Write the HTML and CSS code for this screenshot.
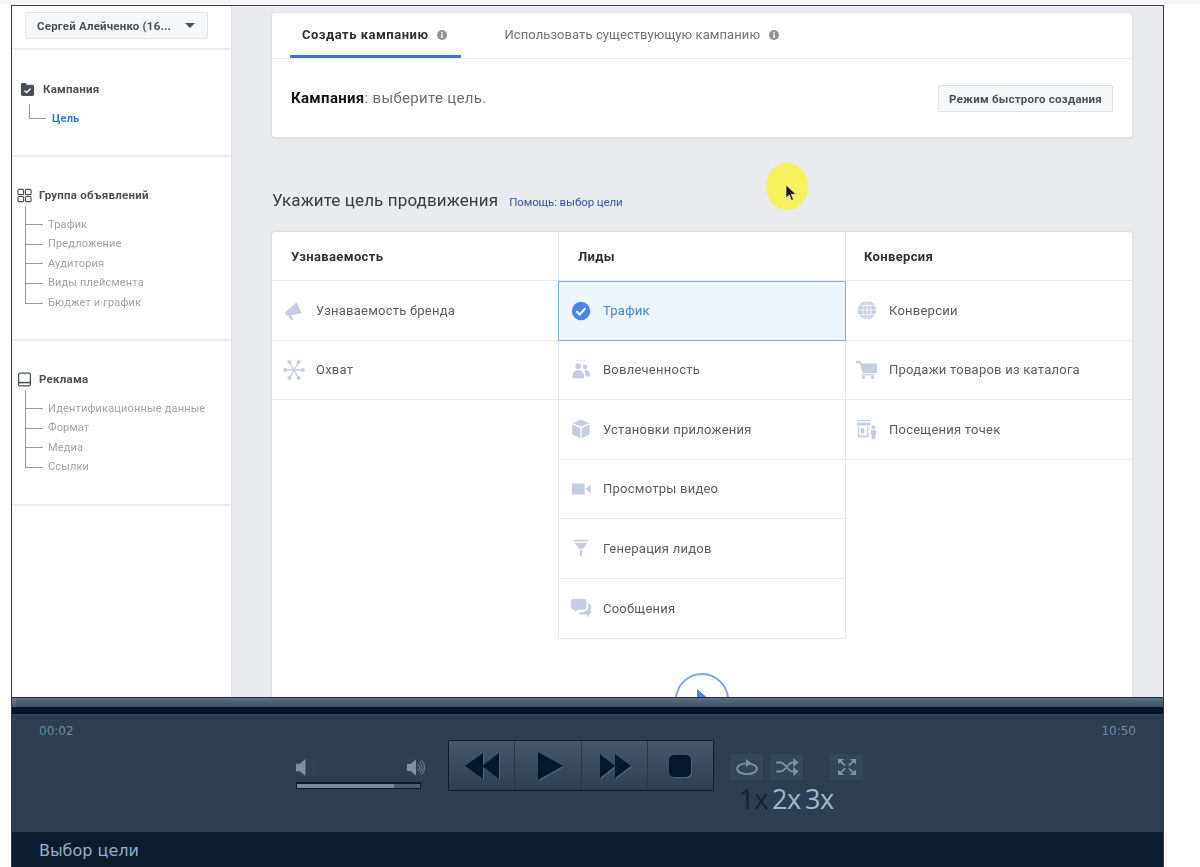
FILE: index.html
```html
<!DOCTYPE html>
<html lang="ru">
<head>
  <meta charset="UTF-8">
  <meta name="viewport" content="width=device-width, initial-scale=1.0">
  <title>Выбор цели</title>
  <link rel="stylesheet" href="styles.css">
</head>
<body>
  <div class="top-strip"></div>
  <div class="frame">
    <div class="app">
      <div class="sidebar">
        <div class="account">
          <div class="account-btn"><span>Сергей Алейченко (16...</span><i class="caret"></i></div>
        </div>
        <div class="side-section">
          <div class="side-head head-campaign">
            <svg class="side-icon" viewBox="0 0 16 16"><path d="M1 4V2.5C1 1.7 1.7 1 2.5 1H6l1.5 2H13c1 0 2 .8 2 2v8c0 1-1 2-2 2H3c-1 0-2-1-2-2z" fill="#4b4f56"/><path d="M4.8 9l2.2 2.2 4.2-4" fill="none" stroke="#fff" stroke-width="1.6"/></svg>
            <span>Кампания</span>
          </div>
          <ul class="tree tree-goal">
            <li class="current">Цель</li>
          </ul>
        </div>
        <div class="side-section">
          <div class="side-head">
            <svg class="side-icon" viewBox="0 0 16 16" fill="none" stroke="#4b4f56" stroke-width="1.2"><rect x="1" y="1.5" width="6" height="5.5" rx="1"/><rect x="9" y="1.5" width="6" height="5.5" rx="1"/><rect x="1" y="9" width="6" height="5.5" rx="1"/><rect x="9" y="9" width="6" height="5.5" rx="1"/></svg>
            <span>Группа объявлений</span>
          </div>
          <ul class="tree">
            <li>Трафик</li>
            <li>Предложение</li>
            <li>Аудитория</li>
            <li>Виды плейсмента</li>
            <li>Бюджет и график</li>
          </ul>
        </div>
        <div class="side-section">
          <div class="side-head">
            <svg class="side-icon" viewBox="0 0 16 16" fill="none" stroke="#4b4f56" stroke-width="1.4"><rect x="1.7" y="1.2" width="12.6" height="13.6" rx="1.6"/><path d="M2 11.3h12" stroke-width="1.6"/></svg>
            <span>Реклама</span>
          </div>
          <ul class="tree">
            <li>Идентификационные данные</li>
            <li>Формат</li>
            <li>Медиа</li>
            <li>Ссылки</li>
          </ul>
        </div>
      </div>

      <div class="main">
        <div class="card top-card">
          <div class="tabs">
            <div class="tab active">Создать кампанию
              <svg class="info" viewBox="0 0 10 10"><circle cx="5" cy="5" r="5" fill="#8d949e"/><rect x="4.2" y="4.2" width="1.6" height="3.8" fill="#fff"/><rect x="4.2" y="2" width="1.6" height="1.5" fill="#fff"/></svg>
            </div>
            <div class="tab">Использовать существующую кампанию
              <svg class="info" viewBox="0 0 10 10"><circle cx="5" cy="5" r="5" fill="#8d949e"/><rect x="4.2" y="4.2" width="1.6" height="3.8" fill="#fff"/><rect x="4.2" y="2" width="1.6" height="1.5" fill="#fff"/></svg>
            </div>
          </div>
          <div class="card-body">
            <div class="campaign-note"><b>Кампания</b>: выберите цель.</div>
            <div class="quick-btn">Режим быстрого создания</div>
          </div>
        </div>

        <div class="goal-title">
          <h2>Укажите цель продвижения</h2>
          <a class="help-link">Помощь: выбор цели</a>
        </div>

        <div class="card goals">
          <div class="goal-cols">
            <div class="goal-col">
              <div class="col-head">Узнаваемость</div>
              <div class="goal">
                <svg class="goal-icon" viewBox="0 0 24 24"><path d="M2 14.5L15 3.5l5 12L4 18.5z" fill="#c4cee0"/><path d="M6 18l2.500 4.500h2.500L9 17.500z" fill="#c4cee0"/></svg>
                Узнаваемость бренда
              </div>
              <div class="goal">
                <svg class="goal-icon" viewBox="0 0 24 24" fill="#c4cee0" stroke="#c4cee0" stroke-width="1.500"><path d="M2 12h20M7 3.300l10 17.400M17 3.300L7 20.700"/><circle cx="2.500" cy="12" r="1.500"/><circle cx="21.500" cy="12" r="1.500"/><circle cx="7" cy="3.300" r="1.500"/><circle cx="17" cy="3.300" r="1.500"/><circle cx="7" cy="20.700" r="1.500"/><circle cx="17" cy="20.700" r="1.500"/></svg>
                Охват
              </div>
            </div>
            <div class="goal-col middle">
              <div class="col-head">Лиды</div>
              <div class="goal selected">
                <svg class="goal-icon" viewBox="0 0 24 24"><circle cx="12" cy="12" r="10" fill="#4a86e8"/><path d="M7 12.300l3.500 3.500 6.500-7" fill="none" stroke="#fff" stroke-width="2.200"/></svg>
                Трафик
              </div>
              <div class="goal">
                <svg class="goal-icon" viewBox="0 0 24 24" fill="#c4cee0"><circle cx="8.500" cy="1.500" r=".7"/><circle cx="12" cy="1.500" r=".7"/><circle cx="15.500" cy="1.500" r=".7"/><circle cx="9" cy="8" r="3.200"/><circle cx="16.500" cy="8.500" r="2.600"/><path d="M2.500 19.500c0-5 3-7.500 6.500-7.500s6.500 2.500 6.500 7.500c0 1-1 1.500-2 1.500h-9c-1 0-2-.5-2-1.500z"/><path d="M16.500 12c3.500 0 5.500 2.500 5.500 5.500 0 1-1 1.500-2 1.500h-3c0-3-.5-5-2-6.500z"/></svg>
                Вовлеченность
              </div>
              <div class="goal">
                <svg class="goal-icon" viewBox="0 0 24 24" fill="#c4cee0"><path d="M12 1.500l9 4-9 4-9-4z"/><path d="M2.500 7l8.800 4v11l-8.800-4zM21.500 7l-8.800 4v11l8.800-4z"/></svg>
                Установки приложения
              </div>
              <div class="goal">
                <svg class="goal-icon" viewBox="0 0 24 24" fill="#c4cee0"><rect x="2" y="6" width="14" height="12"/><path d="M17 12l5.500-5v10z"/></svg>
                Просмотры видео
              </div>
              <div class="goal">
                <svg class="goal-icon" viewBox="0 0 24 24" fill="#c4cee0"><rect x="4" y="3" width="16" height="1.800"/><path d="M5 6.500h14l-5 6.500H10z"/><rect x="10.800" y="14" width="2.400" height="7"/></svg>
                Генерация лидов
              </div>
              <div class="goal">
                <svg class="goal-icon" viewBox="0 0 24 24" fill="#c4cee0"><path d="M4 2h11c1.500 0 3 1.300 3 3v6c0 1.700-1.500 3-3 3H8l-3 3v-3H4c-1.500 0-3-1.300-3-3V5c0-1.700 1.500-3 3-3z"/><path d="M20 7c1.700.3 3 1.500 3 3v6c0 1.500-1 2.500-2 2.800V22l-3.500-3H12c-1.200 0-2-.5-2.600-1.500L15 16c3 0 5-2 5-5z"/></svg>
                Сообщения
              </div>
            </div>
            <div class="goal-col last">
              <div class="col-head">Конверсия</div>
              <div class="goal">
                <svg class="goal-icon" viewBox="0 0 24 24"><circle cx="12" cy="12" r="10" fill="#c4cee0"/><g fill="none" stroke="#fff" stroke-width=".9"><ellipse cx="12" cy="12" rx="4.500" ry="10"/><path d="M12 2v20M2 12h20M3.500 7h17M3.500 17h17"/></g></svg>
                Конверсии
              </div>
              <div class="goal">
                <svg class="goal-icon" viewBox="0 0 24 24" fill="#c4cee0"><path d="M0 2h4.500l1.500 3h17v10.500H7.500L4 4.500H0z"/><rect x="6" y="16.500" width="14" height="1.500"/><circle cx="8" cy="20" r="1.800"/><circle cx="18" cy="20" r="1.800"/></svg>
                Продажи товаров из каталога
              </div>
              <div class="goal">
                <svg class="goal-icon" viewBox="0 0 24 24" fill="#c4cee0"><rect x="1" y="2" width="15" height="1.500"/><rect x="1" y="5" width="15" height="3"/><path d="M2 9.500h1.500V19H12v-9.500h1.500v7H14V21H2z"/><rect x="5" y="11" width="4" height="6"/><circle cx="19" cy="10" r="2.200"/><path d="M16 13h6v5h-1v5h-4v-5h-1z"/></svg>
                Посещения точек
              </div>
            </div>
          </div>
          <div class="next-wrap">
            <div class="next-circle"><i class="next-arrow"></i></div>
          </div>
        </div>
      </div>

      <div class="cursor-spot">
        <svg class="cursor" viewBox="0 0 12 18"><path d="M1 1v13l3.200-3 2.300 5.500 2-.9L6.300 10.300H11z" fill="#1a1a1a" stroke="#fff" stroke-width=".6"/></svg>
      </div>
    </div>

    <div class="player">
      <div class="seek"></div>
      <div class="player-body">
        <div class="times"><span>00:02</span><span>10:50</span></div>
        <div class="controls">
          <div class="volume">
            <div class="vol-icons">
              <div class="vol-btn">
                <svg viewBox="0 0 20 18" fill="#7d91a3"><path d="M0 5h4l6-5v18l-6-5H0z"/></svg>
              </div>
              <div class="vol-btn vol-loud">
                <svg viewBox="0 0 20 18" fill="#7d91a3"><path d="M0 5h4l6-5v18l-6-5H0z"/><path d="M12 5a5 5 0 010 8M14 3a8 8 0 010 12M16 1a11 11 0 010 16" fill="none" stroke="#7d91a3" stroke-width="1"/></svg>
              </div>
            </div>
            <div class="vol-track"><div class="vol-fill"></div></div>
          </div>
          <div class="transport">
            <div class="t-btn">
              <svg viewBox="0 0 34 26"><path d="M18 0v26L0 13zM34 0v26L17 13z"/></svg>
            </div>
            <div class="t-btn">
              <svg viewBox="0 0 34 26"><path d="M7 -1l25 14L7 27z"/></svg>
            </div>
            <div class="t-btn">
              <svg viewBox="0 0 34 26"><path d="M3 1l15 12L3 25zM18 1l16 12-16 12z"/></svg>
            </div>
            <div class="t-btn">
              <svg viewBox="0 0 34 26"><rect x="6" y="2" width="22" height="22" rx="5"/></svg>
            </div>
          </div>
          <div class="extras">
            <div class="extra-btns">
              <div class="x-btn">
                <svg viewBox="0 0 28 20" fill="none" stroke="#7f93a5" stroke-width="2"><ellipse cx="14" cy="12" rx="11" ry="6"/><path d="M13 1l6 5-6 4z" fill="#7f93a5" stroke="none"/></svg>
              </div>
              <div class="x-btn">
                <svg viewBox="0 0 28 20" fill="none" stroke="#7f93a5" stroke-width="2"><path d="M2 5h5c5 0 8 10 13 10h3M2 15h5c5 0 8-10 13-10h3"/><path d="M21 0l6 5-6 5zM21 10l6 5-6 5z" fill="#7f93a5" stroke="none"/></svg>
              </div>
              <div class="x-btn fullscreen">
                <svg viewBox="0 0 28 20" fill="#7f93a5" stroke="#7f93a5"><path d="M4 1h7L4 7zM24 1h-7l7 6zM4 19h7l-7-6zM24 19h-7l7-6z" stroke="none"/><path d="M6 3l6 5.500M22 3l-6 5.500M6 17l6-5.500M22 17l-6-5.500" stroke-width="2"/></svg>
              </div>
            </div>
            <div class="speeds"><span class="speed-on">1x</span><span>2x</span><span>3x</span></div>
          </div>
        </div>
      </div>
      <div class="caption">Выбор цели</div>
    </div>
  </div>
</body>
</html>
```

FILE: styles.css
```css
html, body {
  margin: 0;
  height: 100%;
  overflow: hidden;
}
body {
  background: #fff;
  font-family: Roboto, "Liberation Sans", sans-serif;
}
.top-strip {
  height: 4px;
  background: #f5f5f5;
}
.frame {
  width: 1153px;
  height: 862px;
  margin: 1px 0 0 11px;
  box-sizing: border-box;
  border: 1px solid #3f3550;
  border-bottom: none;
  display: flex;
  flex-direction: column;
}
.app {
  position: relative;
  height: 691px;
  flex: none;
  display: flex;
  overflow: hidden;
  filter: blur(.45px);
}

/* sidebar */
.sidebar {
  width: 219px;
  flex: none;
  background: #fff;
}
.account {
  height: 44px;
  box-sizing: border-box;
  padding: 6px 23px 0 13px;
  border-bottom: 2px solid #eceded;
}
.account-btn {
  height: 27px;
  box-sizing: border-box;
  background: #f6f7f9;
  border: 1px solid #e3e5e8;
  border-radius: 2px;
  display: flex;
  align-items: center;
  justify-content: space-between;
  padding: 0 12px 0 11px;
  font-size: 11.500px;
  font-weight: 700;
  letter-spacing: .2px;
  color: #4b4f56;
}
.caret {
  border-left: 5px solid transparent;
  border-right: 5px solid transparent;
  border-top: 5px solid #4b4f56;
}
.side-section {
  padding: 31px 0 26px;
  border-bottom: 2px solid #eceded;
}
.side-section:last-child {
  padding-bottom: 27px;
}
.side-head {
  height: 16px;
  display: flex;
  align-items: center;
  gap: 7px;
  padding-left: 5px;
  font-size: 11.500px;
  font-weight: 700;
  letter-spacing: .25px;
  color: #4b4f56;
}
.side-head span {
  padding-bottom: 1px;
}
.head-campaign {
  padding-left: 8px;
  gap: 8px;
}
.side-icon {
  width: 15px;
  height: 15px;
}
.tree {
  list-style: none;
  margin: 11px 0 0;
  padding: 0 0 0 36px;
}
.tree li {
  position: relative;
  height: 19.600px;
  line-height: 19.600px;
  font-size: 11px;
  letter-spacing: .17px;
  color: #a0a2a6;
}
.tree li::before {
  content: "";
  position: absolute;
  left: -23px;
  top: -9px;
  width: 17px;
  height: 18.600px;
  border-left: 1px solid #9a9a9a;
  border-bottom: 1px solid #9a9a9a;
}
.tree-goal {
  margin-top: 12px;
  padding-left: 40px;
}
.tree-goal li::before {
  top: -5px;
  height: 14px;
  width: 16px;
}
.current {
  font-weight: 700;
  color: #2a7ad0 !important;
}

/* main column */
.main {
  flex: 1;
  background: #e9ebee;
  padding: 7px 31px 0 40px;
  border-left: 1px solid #e2e3e5;
  box-sizing: border-box;
  min-width: 0;
}
.card {
  background: #fff;
  border-radius: 3px;
  box-shadow: 0 0 0 1px #dfe0e4, 0 1px 2px rgba(0,0,0,.1);
}
.top-card {
  height: 124px;
  display: flex;
  flex-direction: column;
}
.tabs {
  height: 45px;
  flex: none;
  display: flex;
  padding-left: 18px;
  border-bottom: 1px solid #e9ebee;
}
.tab {
  height: 45px;
  box-sizing: border-box;
  display: flex;
  align-items: center;
  gap: 9px;
  padding: 0 14px 2px 12px;
  margin-right: 31px;
  white-space: nowrap;
  font-size: 13px;
  letter-spacing: .08px;
  color: #6f7276;
}
.tab.active {
  font-weight: 700;
  color: #2c2f33;
  border-bottom: 3px solid #3b74d9;
  padding-top: 1px;
  padding-bottom: 0;
  letter-spacing: .5px;
}
.info {
  width: 10px;
  height: 10px;
  flex: none;
}
.card-body {
  flex: 1;
  display: flex;
  align-items: center;
  justify-content: space-between;
  padding: 0 19px;
}
.campaign-note {
  font-size: 15px;
  letter-spacing: .32px;
  color: #6a6d70;
}
.campaign-note b {
  color: #111;
  font-weight: 700;
}
.quick-btn {
  width: 175px;
  height: 27px;
  box-sizing: border-box;
  background: #f6f7f9;
  border: 1px solid #dfe1e5;
  border-radius: 2px;
  padding-top: 1px;
  font-size: 11.500px;
  font-weight: 700;
  letter-spacing: .22px;
  color: #4b4f56;
  display: flex;
  align-items: center;
  justify-content: center;
}
.goal-title {
  height: 22px;
  margin: 52px 0 21px;
  display: flex;
  align-items: center;
  gap: 11px;
}
.goal-title h2 {
  margin: 0;
  font-size: 17px;
  font-weight: 400;
  letter-spacing: .12px;
  color: #3a3c3f;
}
.help-link {
  font-size: 11.500px;
  letter-spacing: -.1px;
  color: #365899;
  padding-top: 3px;
}
.goal-cols {
  display: grid;
  grid-template-columns: 286px 288px 286px;
  align-items: start;
}
.goal-col {
  min-width: 0;
}
.goal-col.middle {
  border-left: 1px solid #e4e5e8;
  border-right: 1px solid #e4e5e8;
  border-bottom: 1.500px solid #e4e5e8;
}
.goal-col.middle .goal:last-child {
  border-bottom: none;
  height: 59px;
}
.col-head {
  height: 49px;
  box-sizing: border-box;
  border-bottom: 1.500px solid #e9ebee;
  display: flex;
  align-items: center;
  padding-left: 19px;
  font-size: 13px;
  font-weight: 700;
  letter-spacing: .35px;
  color: #2f3236;
}
.goal {
  height: 59.500px;
  box-sizing: border-box;
  border-bottom: 1.500px solid #e9ebee;
  display: flex;
  align-items: center;
  gap: 11px;
  padding-left: 11px;
  font-size: 13px;
  letter-spacing: .24px;
  color: #5a5d61;
}
.goal-col.last .col-head {
  padding-left: 18px;
}
.goal-col.last .goal {
  padding-left: 10px;
}
.goal.selected {
  background: #edf5fd;
  color: #3f87d8;
  outline: 1px solid #7db0e6;
  outline-offset: -1px;
  margin: 0 -1px;
  padding-left: 12px;
  border-bottom: none;
}
.goal-icon {
  width: 22px;
  height: 22px;
  flex: none;
}
.next-wrap {
  display: flex;
  justify-content: center;
  padding: 34px 0 30px;
}
.next-circle {
  width: 54px;
  height: 54px;
  box-sizing: border-box;
  border: 2px solid #7ba6ea;
  border-radius: 50%;
  display: flex;
  align-items: center;
  justify-content: center;
}
.next-arrow {
  border-left: 13px solid #4a86e8;
  border-top: 11px solid transparent;
  border-bottom: 11px solid transparent;
  margin-left: 3px;
}

/* yellow highlight around the pointer */
.cursor-spot {
  position: absolute;
  left: 754px;
  top: 157px;
  width: 42px;
  height: 47px;
  border-radius: 50%;
  background: #f5f25c;
}
.cursor {
  position: absolute;
  left: 19px;
  top: 21px;
  width: 12px;
  height: 18px;
}

/* player */
.player {
  flex: 1;
  display: flex;
  flex-direction: column;
  border-top: 1px solid #2e2a3c;
  min-height: 0;
}
.seek {
  height: 17px;
  flex: none;
  box-sizing: border-box;
  background:
    linear-gradient(#677c8e, #485c6e) no-repeat 0 0 / 4px 9px,
    linear-gradient(#5a6f82, #3c5063 9px, #01152a 9px);
  border-bottom: 1px solid #4a3d5c;
}
.player-body {
  flex: 1;
  background: #2c3e50;
  padding: 9px 27px 0;
  box-sizing: border-box;
}
.times {
  height: 14px;
  display: flex;
  justify-content: space-between;
  align-items: center;
  font-family: "DejaVu Sans", sans-serif;
  font-size: 12px;
  color: #7189a0;
}
.controls {
  display: flex;
  align-items: flex-start;
  margin-top: 2px;
  padding-left: 257px;
}
.volume {
  width: 129px;
  margin: 19px 23px 0 0;
}
.vol-icons {
  display: flex;
  justify-content: space-between;
  height: 17px;
}
.vol-btn {
  width: 20px;
  height: 17px;
  background: #2f4255;
}
.vol-btn svg {
  display: block;
  width: 19px;
  height: 17px;
}
.vol-loud svg {
  margin-left: 2px;
  width: 18px;
}
.vol-track {
  width: 125px;
  height: 7px;
  margin-top: 6px;
  box-sizing: border-box;
  background: #4a5e71;
  border: 1px solid #0b1c2e;
  border-top-width: 2px;
}
.vol-fill {
  width: 79%;
  height: 100%;
  background: #75899c;
}
.transport {
  width: 266px;
  height: 51px;
  flex: none;
  box-sizing: border-box;
  border: 1px solid #0b1c2e;
  border-radius: 1px;
  display: flex;
  margin-right: 16px;
}
.t-btn {
  flex: 1;
  display: flex;
  align-items: center;
  justify-content: center;
  background: linear-gradient(#46596c, #2d3f51);
  border-right: 1px solid #25374a;
}
.t-btn:last-child {
  border-right: none;
}
.t-btn svg {
  width: 34px;
  height: 26px;
  fill: #03172d;
  overflow: visible;
  filter: drop-shadow(1px 1px 0 #52677b);
}
.extras {
  margin-top: 14px;
}
.extra-btns {
  display: flex;
  gap: 7px;
}
.x-btn {
  width: 33px;
  height: 26px;
  background: #33475a;
  display: flex;
  align-items: center;
  justify-content: center;
}
.x-btn svg {
  width: 26px;
  height: 18px;
}
.fullscreen {
  margin-left: 20px;
}
.speeds {
  display: flex;
  gap: 4px;
  padding-left: 9px;
  height: 32px;
  line-height: 32px;
  margin-top: 3px;
  font-family: "Open Sans", sans-serif;
  font-size: 27px;
  letter-spacing: -.3px;
  color: #9cb8cc;
}
.speed-on {
  color: #0f2438;
}
.caption {
  height: 35px;
  flex: none;
  box-sizing: border-box;
  background: #0c1e2e;
  padding: 1px 0 0 27px;
  display: flex;
  align-items: center;
  font-family: "DejaVu Sans", sans-serif;
  font-size: 16px;
  color: #93aec8;
}
```
